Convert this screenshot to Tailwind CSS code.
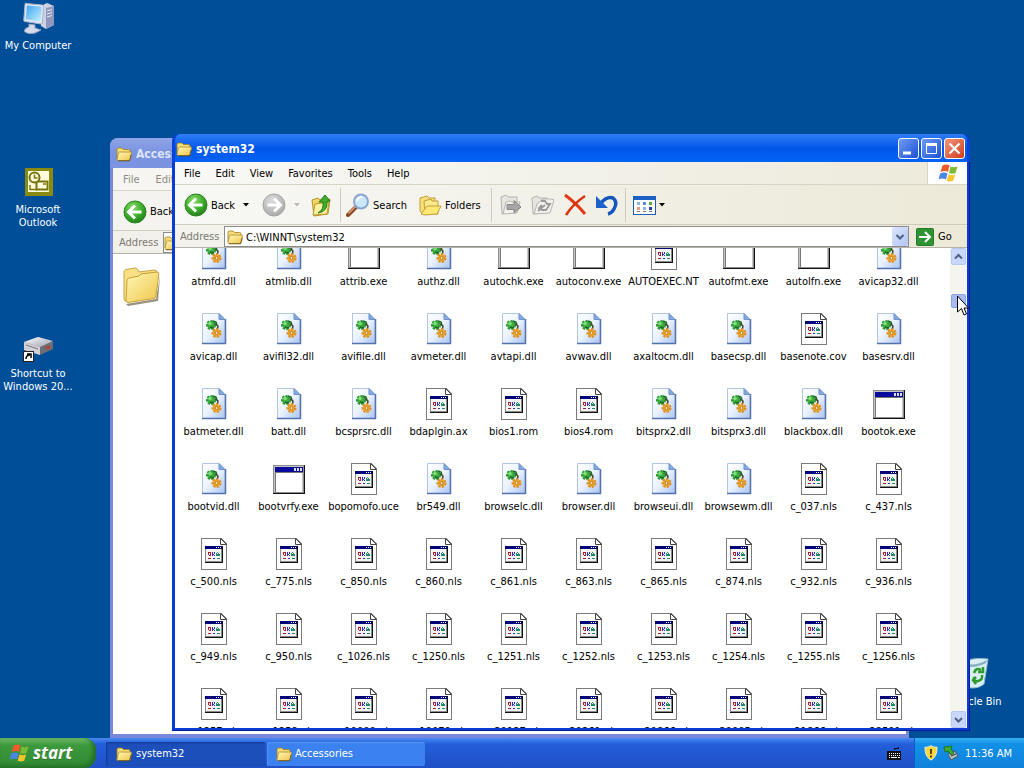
<!DOCTYPE html>
<html lang="en">
<head>
    <meta charset="UTF-8">
    <meta name="viewport" content="width=device-width, initial-scale=1.0">
    <title>system32</title>
    <script src="https://cdn.jsdelivr.net/npm/@tailwindcss/browser@4"></script>
</head>
<body class="h-screen overflow-hidden bg-[#004e98] font-['DejaVu_Sans_Condensed','DejaVu_Sans',sans-serif] text-[11px] leading-[13px] text-black">

    <!-- Icon sprites -->
    <svg class="absolute size-0" xmlns="http://www.w3.org/2000/svg">
        <defs>
            <linearGradient id="gFolder" x1="0" y1="0" x2="1" y2="1"><stop offset="0" stop-color="#fff9b8"/><stop offset="1" stop-color="#efc44a"/></linearGradient>
            <linearGradient id="gPage" x1="0" y1="0" x2="1" y2="1"><stop offset="0" stop-color="#ffffff"/><stop offset=".5" stop-color="#eaf2ff"/><stop offset="1" stop-color="#a9c4f2"/></linearGradient>
            <radialGradient id="gGreen" cx=".4" cy=".3" r=".75"><stop offset="0" stop-color="#8fdc6c"/><stop offset=".55" stop-color="#3fae2c"/><stop offset="1" stop-color="#1f7d17"/></radialGradient>
            <radialGradient id="gGrey" cx=".4" cy=".3" r=".75"><stop offset="0" stop-color="#dcdcdc"/><stop offset="1" stop-color="#a9a9a9"/></radialGradient>
            <linearGradient id="gScreen" x1="0" y1="0" x2="1" y2="1"><stop offset="0" stop-color="#3fa4f2"/><stop offset="1" stop-color="#c4f2fd"/></linearGradient>
            <linearGradient id="gMetal" x1="0" y1="0" x2="1" y2="1"><stop offset="0" stop-color="#ffffff"/><stop offset="1" stop-color="#9a9fae"/></linearGradient>
        </defs>
        <symbol id="dll" viewBox="-1 0 33 32">
            <path d="M4.500 .5h16.500l6 6v24h-22.500z" fill="url(#gPage)" stroke="#b3c5e4"/>
            <path d="M27.500 6v25M4 30.500h24" stroke="#5472ad" stroke-width="1.500"/>
            <path d="M21 .5v6h6z" fill="#84a9e0" stroke="#6f93cd"/>
            <circle cx="13" cy="12" r="3.800" fill="#43b043" stroke="#2f9a32" stroke-width="2.500" stroke-dasharray="2.200 1.200"/>
            <circle cx="12" cy="10.500" r="1.800" fill="#7be07c"/>
            <path d="M15 8l3 1 1 3M12 14l4 1" stroke="#1c6a24" stroke-width="1.500" fill="none"/>
            <path d="M17 11l3 2-1 5" stroke="#45452a" stroke-width="1.500" fill="none"/>
            <circle cx="18.500" cy="20" r="3.800" fill="#f3ad35" stroke="#dd9328" stroke-width="2.500" stroke-dasharray="2.200 1.200"/>
            <circle cx="18.500" cy="20" r="1.500" fill="#fbe8b2" stroke="#b97a1c"/>
        </symbol>
        <symbol id="doc" viewBox="-1 0 33 32" shape-rendering="crispEdges">
            <path d="M3 0h20l6 6v26h-26z" fill="#7b7b7b"/>
            <path d="M4 1h18l6 6v24h-24z" fill="#fff"/>
            <path d="M22.500 .5v6h6z" fill="#fff" stroke="#444" shape-rendering="auto"/>
            <path d="M7 8h18v17h-18z" fill="#111"/>
            <path d="M7 8h17v16h-17z" fill="#8b8b8b"/>
            <path d="M8 9h15v14h-15z" fill="#f4f4f4"/>
            <path d="M7 8h17v3h-17z" fill="#00007b"/>
            <path d="M18 9h1v1h-1zM20 9h1v1h-1zM22 9h1v1h-1z" fill="#fff"/>
            <path d="M10 14h3v1h-3zM10 15h1v2h-1zM12 15h1v2h-1zM11 17h2v1h-2zM10 20h3v1h-3z" fill="#a8202f"/>
            <path d="M14 14h1v4h-1zM15 16h1v1h-1zM16 14h1v2h-1zM16 17h1v1h-1zM15 20h2v1h-2z" fill="#2f2bc8"/>
            <path d="M19 14h1v1h-1zM18 15h1v3h-1zM19 16h3v2h-3zM20 15h1v1h-1zM19 20h3v1h-3z" fill="#1d8a68"/>
        </symbol>
        <symbol id="exe" viewBox="-1 0 33 32" shape-rendering="crispEdges">
            <rect x="0" y="2" width="32" height="29" fill="#111"/>
            <rect x="0" y="2" width="31" height="28" fill="#8c8c8c"/>
            <rect x="1" y="3" width="29" height="26" fill="#c6c6c6"/>
            <rect x="3" y="10" width="26" height="19" fill="#fff"/>
            <path d="M2.500 29v-19.500h27" fill="none" stroke="#777"/>
            <rect x="2" y="4" width="28" height="5" fill="#0a0a9c"/>
            <path d="M21 5h2v3h-2zM24 5h2v3h-2zM27 5h2v3h-2z" fill="#ddd"/>
        </symbol>
        <symbol id="folder" viewBox="0 0 16 16">
            <path d="M1 13V3.500q0-1.500 1.500-1.500h3.500l1.500 1.500h5q1.500 0 1.500 1.500v8z" fill="#f7dc7a" stroke="#a07c1c" stroke-width=".8"/>
            <path d="M2 14.500q-1 0-1-1.200l1.500-6.300q.2-1 1.200-1h10.800q1.200 0 1 1l-1.300 6.500q-.2 1-1.200 1z" fill="url(#gFolder)" stroke="#b08c2c" stroke-width=".8"/>
            <path d="M2 14.800h11.500l1.700-6" fill="none" stroke="#604a10" stroke-width=".8"/>
        </symbol>
        <symbol id="folder-big" viewBox="0 0 40 40">
            <path d="M4 38l30-5 4-23-2 25-30 5z" fill="#6c6247" opacity=".7"/>
            <path d="M2 6q0-2 2-2.500l9-1.500q2 0 3 2l1 2 15-2q3 0 3 2.500l-1 23-29 6q-3 0-3-3z" fill="#f8e184" stroke="#c9a540"/>
            <path d="M4 34.500l1-20q0-2 2-2.500l10-2 2-2 16-2q2 0 1.800 2l-2.800 22q0 2-2 2.500l-26 4q-2 0-2-2z" fill="url(#gFolder)" stroke="#c7a036"/>
        </symbol>
        <symbol id="back" viewBox="0 0 24 24">
            <circle cx="12" cy="12" r="11" fill="url(#gGreen)" stroke="#2c8324"/>
            <path d="M12 5.500L5.500 12l6.500 6.500M6.500 12H18.500" fill="none" stroke="#fff" stroke-width="3"/>
        </symbol>
        <symbol id="forward" viewBox="0 0 24 24">
            <circle cx="12" cy="12" r="11" fill="url(#gGrey)" stroke="#a5a5a5"/>
            <path d="M12 5.500L18.500 12L12 18.500M17.500 12H5.500" fill="none" stroke="#fff" stroke-width="3"/>
        </symbol>
        <symbol id="flag" viewBox="0 0 20 20">
            <path d="M4.500 2.500q4-2 7 0l-1.500 6.500q-3-2-7.500 0z" fill="#ee5b28"/>
            <path d="M12.500 3.500q3 1.500 7 0l-2 6.500q-3.500 1.500-6.500 0z" fill="#7cbb35"/>
            <path d="M2.200 10.500q4-2 7.300 0l-1.500 6q-3.500-2-7.500 0z" fill="#4a86e6"/>
            <path d="M10.500 11.300q3 1.700 6.700 0l-2 6.500q-3.500 1.500-6.500 0z" fill="#f8c52b"/>
        </symbol>
    </svg>

    <div class="flex h-full flex-col">
        <!-- Desktop -->
        <main class="relative flex-1">
            <div class="absolute left-0 top-[2px] flex w-[76px] flex-col items-center gap-[5px] text-center text-white">
                <svg class="size-8" viewBox="0 0 32 32">
                    <path d="M19 4l6-3 7 3v19l-8 4-5-3z" fill="#ccd2e4"/>
                    <path d="M24 6l8-2v19l-8 4z" fill="#8e98bd"/>
                    <path d="M25 9l5-1.500M25 12l5-1.500M25 15l5-1.500" stroke="#e8ebf5"/>
                    <path d="M4 1.500l16 1.500q1.500 0 1.500 1.500l-1 16q0 1.500-1.500 1.500l-16-2.500q-1.500 0-1.200-1.500l1.200-15.500q0-1.500 1-1.500z" fill="#dfe6f2" stroke="#a9b4d0"/>
                    <path d="M5 3.500l14.500 1.300-1 14.700-14.800-2.200z" fill="url(#gScreen)"/>
                    <path d="M7 22l6 1v3l6 2-6 3q-6 2-10-1-2-3 4-5z" fill="#d5daea" stroke="#9aa4c4"/>
                </svg>
                <span>My Computer</span>
            </div>
            <div class="absolute left-0 top-[166px] flex w-[76px] flex-col items-center gap-[5px] text-center text-white">
                <svg class="size-8" viewBox="0 0 32 32">
                    <rect x="3" y="2" width="28" height="28" fill="#8b8a10"/>
                    <rect x="6" y="5" width="21" height="21" fill="#fffde0"/>
                    <rect x="14.500" y="15.500" width="11" height="8" fill="#fffde0" stroke="#777508" stroke-width="2"/>
                    <circle cx="12.500" cy="11.500" r="5" fill="#fffde0" stroke="#777508" stroke-width="2"/>
                    <path d="M12.500 8.500v3.500h3M8 19v4.500h7M21 18h3" stroke="#777508" stroke-width="1.500" fill="none"/>
                </svg>
                <span>Microsoft<br>Outlook</span>
            </div>
            <div class="absolute left-0 top-[330px] flex w-[76px] flex-col items-center gap-[5px] text-center text-white">
                <svg class="size-8" viewBox="0 0 32 32">
                    <path d="M2 12l14-5 15 5v7l-13 6-16-6z" fill="#6d6d74"/>
                    <path d="M2 12l14-5 15 4-13 6z" fill="url(#gMetal)"/>
                    <path d="M2 12l16 5v8l-16-5z" fill="#d0d0d6"/>
                    <path d="M4 15l12 4" stroke="#777"/>
                    <rect x="24" y="16" width="4" height="3" fill="#b94034"/>
                    <rect x="1.500" y="21.500" width="10" height="10" fill="#fff" stroke="#222"/>
                    <path d="M4 29q0-4 4-4M5 24h4v4" stroke="#000" stroke-width="1.500" fill="none"/>
                </svg>
                <span>Shortcut to<br>Windows 20...</span>
            </div>
            <div class="absolute left-[935px] top-[658px] flex w-[76px] flex-col items-center gap-[5px] text-center text-white">
                <svg class="size-8" viewBox="0 0 32 32">
                    <path d="M5 4q12-5 26-3l-4 25q-7 6-18 3z" fill="#d9eef5" stroke="#8fbccb"/>
                    <path d="M6 5q12 4 24-3l-1 3q-12 6-22 3z" fill="#86aebf"/>
                    <path d="M17 15q2-6 7-3M26 9v5h-5M25 17q1 5-4 6M17 19q-1 5 4 4M19 26l-3-4 3-3" fill="none" stroke="#2e9b2c" stroke-width="2.500"/>
                </svg>
                <span>Recycle Bin</span>
            </div>

            <!-- Accessories window -->
            <section class="absolute bottom-0 left-[110px] top-[138px] flex w-[799px] flex-col overflow-hidden rounded-t-lg bg-[#7a88dc] px-[3px] pb-1">
                <header class="-mx-[3px] flex h-[30px] items-center gap-1 bg-linear-to-b from-[#8fa5e8] via-[#7a92e0] to-[#7b94e2] pl-[6px] pt-[2px] text-xs font-bold text-[#dbe4fa]">
                    <svg class="size-4"><use href="#folder"/></svg>
                    <h2>Accessories</h2>
                </header>
                <nav class="flex h-[23px] items-center gap-4 border-b border-[#d8d5c8] bg-[#f6f5f1] pl-[10px] text-[#8d8b84]">
                    <span>File</span><span>Edit</span>
                </nav>
                <div class="flex h-10 items-center gap-[3px] border-b border-[#d0cdbf] bg-[#f4f3ef] pl-[10px] pt-[2px]">
                    <svg class="size-6"><use href="#back"/></svg>
                    <span>Back</span>
                </div>
                <div class="flex h-[23px] items-center gap-1 border-b border-[#b5b3aa] bg-[#f1f0ea] pl-[6px] pt-[1px] text-[#7c7a73]">
                    <span class="w-10">Address</span>
                    <span class="flex h-[21px] flex-1 items-center border border-[#8b8b8b] bg-white"><svg class="size-4"><use href="#folder"/></svg></span>
                </div>
                <div class="flex-1 bg-white px-[9px] pt-3"><svg class="size-10"><use href="#folder-big"/></svg></div>
            </section>

            <!-- system32 window -->
            <section class="absolute bottom-[7px] left-[172px] top-[134px] flex w-[798px] flex-col rounded-t-lg bg-[#0a3bd2] px-[3px] pb-[3px] shadow-[inset_-1px_-1px_0_#001c96]">
                <header class="-mx-[3px] flex h-7 items-center gap-1 rounded-t-lg border-x-[3px] border-[#0844d8] bg-linear-to-b from-[#2f7df6] via-[#0256e8] to-[#0463f5] pl-[1px] pr-[2px] pt-[1px] text-xs font-bold text-white">
                    <svg class="size-4"><use href="#folder"/></svg>
                    <h1 class="flex-1 pt-[1px]">system32</h1>
                    <div class="flex gap-[2px]">
                        <button aria-label="Minimize" class="size-[21px] rounded-[3px] border border-white bg-linear-to-br from-[#6f9af5] to-[#1c4fd4]"><svg viewBox="0 0 19 19"><path d="M4 14h8" stroke="#fff" stroke-width="3"/></svg></button>
                        <button aria-label="Maximize" class="size-[21px] rounded-[3px] border border-white bg-linear-to-br from-[#6f9af5] to-[#1c4fd4]"><svg viewBox="0 0 19 19"><path d="M4.500 5v9.500h10v-9.500" fill="none" stroke="#fff"/><path d="M4 5.500h11" stroke="#fff" stroke-width="3"/></svg></button>
                        <button aria-label="Close" class="size-[21px] rounded-[3px] border border-white bg-linear-to-br from-[#f0957a] to-[#cf3a16]"><svg viewBox="0 0 19 19"><path d="M4.500 4.500l10 10M14.500 4.500l-10 10" stroke="#fff" stroke-width="2.200"/></svg></button>
                    </div>
                </header>

                <div class="flex h-[23px] border-b border-[#d8d4c4] bg-linear-to-r from-[#f8f8f6] to-[#edeadb]">
                    <nav class="flex flex-1 items-center gap-[15px] pl-[9px]">
                        <button>File</button><button>Edit</button><button>View</button><button>Favorites</button><button>Tools</button><button>Help</button>
                    </nav>
                    <div class="flex w-10 items-center justify-center border-l border-[#d8d4c4] bg-white"><svg class="size-5"><use href="#flag"/></svg></div>
                </div>

                <div class="flex h-10 items-center border-b border-[#cfccbd] bg-linear-to-r from-[#f8f8f6] to-[#ece9d8] pl-[9px] pt-[1px]">
                    <button class="flex w-[58px] items-center gap-[3px]"><svg class="size-6"><use href="#back"/></svg>Back</button>
                    <svg class="h-1 w-2" viewBox="0 0 8 4"><path d="M1 0h6l-3 3.500z" fill="#000"/></svg>
                    <button aria-label="Forward" class="ml-3"><svg class="size-6"><use href="#forward"/></svg></button>
                    <svg class="ml-[7px] h-1 w-2" viewBox="0 0 8 4"><path d="M1 0h6l-3 3.500z" fill="#bcbab2"/></svg>
                    <button aria-label="Up" class="ml-2">
                        <svg class="size-6" viewBox="0 0 24 24">
                            <path d="M3 7l6-2 2 2 10-1-2 15-14 2z" fill="#f2d467" stroke="#b8962e"/>
                            <path d="M4 22l2-11 14-2-2 12z" fill="#fdf0a0" stroke="#b8962e"/>
                            <path d="M9 20q6-3 5-11h-4l6-7 5 6-3 .5q1 10-9 11.500z" fill="#3fae2c" stroke="#227a1b"/>
                        </svg>
                    </button>
                    <span class="ml-[7px] h-[34px] border-l border-[#cfccbe]"></span>
                    <button class="ml-[5px] flex w-[68px] items-center gap-[3px]">
                        <svg class="size-6" viewBox="0 0 24 24">
                            <path d="M10 14l-8 8" stroke="#8b4a22" stroke-width="4" stroke-linecap="round"/><path d="M9.500 13.500l-7 7" stroke="#e2a27c" stroke-width="1.500"/>
                            <circle cx="15" cy="8.500" r="7" fill="#c9e8fb" stroke="#8aa7d4" stroke-width="2"/><path d="M11 8q1-4 5-4" stroke="#fff" stroke-width="2" fill="none"/>
                        </svg>Search
                    </button>
                    <button class="ml-1 flex w-[69px] items-center gap-[3px]">
                        <svg class="size-6" viewBox="0 0 24 24">
                            <path d="M2 5l7-2 2 2h6v14l-13 1-2-2z" fill="#f8e07c" stroke="#c39f38"/><path d="M6 8l7-2 1 2h6v13h-13z" fill="#fbe98f" stroke="#c39f38"/><path d="M3 21l6-8h14l-4 8-12 1z" fill="#ffe873" stroke="#c39f38"/>
                        </svg>Folders
                    </button>
                    <span class="ml-1 h-[34px] border-l border-[#cfccbe]"></span>
                    <button aria-label="Move To" class="ml-[7px]">
                        <svg class="size-6" viewBox="0 0 24 24"><path d="M2 4l5-2 2 2h9v14l-15 3z" fill="#e6e5e2" stroke="#b5b4b0"/><path d="M4 21l3-12 4-1 2 1h8l-3 11z" fill="#f2f1ee" stroke="#b5b4b0"/><path d="M8 11.500h7v-4l7 6.500-7 6v-3.500h-7z" fill="#a5a5a5" stroke="#888"/></svg>
                    </button>
                    <button aria-label="Copy To" class="ml-[7px]">
                        <svg class="size-6" viewBox="0 0 24 24"><path d="M2 5l5-2 2 2h8l-2 15-12 1z" fill="#e6e5e2" stroke="#b5b4b0"/><path d="M4 21l3-10 6-5h8l3 1-4 13z" fill="#f2f1ee" stroke="#b5b4b0"/><path d="M8 18l7-6M11 8h4l2 3h3l-4 6h-4l-3-2 3-3" fill="none" stroke="#999" stroke-width="1.800"/></svg>
                    </button>
                    <button aria-label="Delete" class="ml-[9px]">
                        <svg class="size-6" viewBox="0 0 24 24"><path d="M2 2q11 8 20 19" stroke="#e23a12" stroke-width="3" fill="none"/><path d="M22 3q-12 8-19 19" stroke="#d8340f" stroke-width="2.500" fill="none"/></svg>
                    </button>
                    <button aria-label="Undo" class="ml-2">
                        <svg class="size-6" viewBox="0 0 24 24"><path d="M6 10q6-7 12-5 5 4 1 11-2 4-6 5" fill="none" stroke="#1457bd" stroke-width="3.500"/><path d="M1 3v12h12z" fill="#1c62c8"/></svg>
                    </button>
                    <span class="ml-[6px] h-[34px] border-l border-[#cfccbe]"></span>
                    <button aria-label="Views" class="ml-[6px] flex items-center gap-[2px]">
                        <svg class="size-6" viewBox="0 0 24 24" shape-rendering="crispEdges">
                            <rect x="1.500" y="3.500" width="22" height="18" fill="#fff" stroke="#1d5cb8"/><rect x="1" y="3" width="23" height="4" fill="#1c62c4"/>
                            <path d="M5 9h3v3h-3zM11 14h3v3h-3z" fill="#8fb2e4"/><path d="M11 9h3v3h-3z" fill="#5a8ee0"/><path d="M17 9h3v3h-3z" fill="#57a944"/><path d="M5 14h3v3h-3z" fill="#e79b86"/><path d="M17 14h3v3h-3z" fill="#2c3eaa"/><path d="M5 18h3v1h-3zM11 18h3v1h-3zM17 18h3v1h-3z" fill="#777"/>
                        </svg>
                        <svg class="h-1 w-2" viewBox="0 0 8 4"><path d="M1 0h6l-3 3.500z" fill="#000"/></svg>
                    </button>
                </div>

                <div class="flex h-[23px] items-center border-b border-[#b5b3aa] bg-linear-to-r from-[#f3f2ec] to-[#ece9d8] pl-[5px] pt-[1px]">
                    <label for="address" class="w-11 text-[#7c7a73]">Address</label>
                    <div class="flex h-[21px] flex-1 items-center border border-[#8b8b8b] bg-white pl-[2px]">
                        <svg class="size-4"><use href="#folder"/></svg>
                        <input id="address" type="text" value="C:\WINNT\system32" class="ml-[3px] flex-1 pt-[1px] outline-none">
                        <button aria-label="Show addresses" class="h-[19px] w-4 rounded-xs bg-linear-to-br from-[#dbe5fd] to-[#b2c5f3]"><svg viewBox="0 0 16 16"><path d="M4.500 6l3.500 3.500 3.500-3.500" fill="none" stroke="#4d6185" stroke-width="2"/></svg></button>
                    </div>
                    <button class="ml-[7px] flex w-[51px] items-center gap-1">
                        <svg class="size-[18px]" viewBox="0 0 18 18"><rect x=".5" y=".5" width="17" height="17" rx="1" fill="#2f9334" stroke="#237a28"/><path d="M3 9h10M9 4l5 5-5 5" fill="none" stroke="#fff" stroke-width="2"/></svg>Go
                    </button>
                </div>

                <div class="flex min-h-0 flex-1 overflow-hidden bg-white">
                    <ul id="files" class="-mt-[10px] grid flex-1 auto-rows-[75px] grid-cols-[repeat(auto-fill,75px)] pl-[1px]"></ul>
                    <div class="flex w-[17px] flex-col items-center bg-[#f5f4ee]">
                        <button aria-label="Scroll up" class="h-[17px] w-[15px] rounded-xs border border-[#b6c7f0] bg-[#c9d7fc]"><svg viewBox="0 0 13 15"><path d="M3 9.500l3.500-3.500 3.500 3.500" fill="none" stroke="#4d6185" stroke-width="2"/></svg></button>
                        <div class="mt-[29px] h-[14px] w-[15px] rounded-xs border border-[#8da4dc] bg-[#a7bbf0]"></div>
                        <button aria-label="Scroll down" class="mt-auto h-[17px] w-[15px] rounded-xs border border-[#b6c7f0] bg-[#c9d7fc]"><svg viewBox="0 0 13 15"><path d="M3 6l3.500 3.500 3.500-3.500" fill="none" stroke="#4d6185" stroke-width="2"/></svg></button>
                    </div>
                </div>
            </section>

            <!-- Mouse pointer -->
            <svg class="absolute left-[957px] top-[295px] h-[21px] w-3" viewBox="0 0 12 21"><path d="M.5 1v16l4-3.500 2.500 6.500 2.500-1-2.500-6h4.500z" fill="#fff" stroke="#000"/></svg>
        </main>

        <!-- Taskbar -->
        <footer class="flex h-[30px] bg-linear-to-b from-[#4a8af2] via-[#245edb] via-20% to-[#1f4fc4] text-white">
            <button class="flex w-24 items-center gap-1 rounded-r-xl bg-linear-to-b from-[#6cbb66] via-[#3c993d] via-25% to-[#2f8a31] pl-[9px] text-[17px] font-bold italic leading-5 font-['Open_Sans',sans-serif] shadow-[inset_-3px_-2px_4px_#236b26] text-shadow-xs">
                <svg class="size-5"><use href="#flag"/></svg>start
            </button>
            <div class="flex flex-1 items-center gap-[2px] pl-[10px] pt-[1px]">
                <button class="flex h-6 w-[159px] items-center gap-1 rounded-xs bg-[#1c4fba] pl-[10px] shadow-[inset_1px_1px_2px_#123a90]"><svg class="size-4"><use href="#folder"/></svg>system32</button>
                <button class="flex h-6 w-[158px] items-center gap-[3px] rounded-xs bg-[#3c81f0] pl-[9px] shadow-[inset_1px_1px_1px_#5394f6]"><svg class="size-4"><use href="#folder"/></svg>Accessories</button>
            </div>
            <svg class="mr-3 mt-2 size-4" viewBox="0 0 16 16" shape-rendering="crispEdges"><path d="M8 4v-2h4v-1" stroke="#111" fill="none"/><rect x="1" y="5" width="14" height="9" fill="#111"/><path d="M3 7.500h11M3 9.500h11" stroke="#fff" stroke-dasharray="1 1"/><path d="M3 11.500h1M5 11.500h6M12 11.500h2" stroke="#fff"/></svg>
            <div class="flex w-[110px] items-center border-l border-[#0a5fc0] bg-linear-to-b from-[#35b1f5] via-[#1290e8] via-20% to-[#0f82dc] pl-2">
                <svg class="size-4" viewBox="0 0 16 16"><path d="M8 .7q3 2 6 1.500.5 9-6 13-6.500-4-6-13 3 .5 6-1.500z" fill="#f7d63c" stroke="#e9efd8"/><path d="M8 4v5" stroke="#5c4300" stroke-width="2"/><path d="M8 10.500v2" stroke="#5c4300" stroke-width="2"/></svg>
                <svg class="ml-1 size-4" viewBox="0 0 16 16"><path d="M5 9l7-3 3 5-7 4z" fill="#b7bfc6" stroke="#4b5660"/><path d="M8 11l5-2" stroke="#333"/><path d="M1 2l8-1-1 3 3 4-3 2-3-4-3 1z" fill="#3cab36" stroke="#1f7423"/></svg>
                <time class="ml-[6px] whitespace-nowrap">11:36 AM</time>
            </div>
        </footer>
    </div>

    <script>
        const names = `atmfd.dll atmlib.dll attrib.exe authz.dll autochk.exe autoconv.exe AUTOEXEC.NT autofmt.exe autolfn.exe avicap32.dll
            avicap.dll avifil32.dll avifile.dll avmeter.dll avtapi.dll avwav.dll axaltocm.dll basecsp.dll basenote.cov basesrv.dll
            batmeter.dll batt.dll bcsprsrc.dll bdaplgin.ax bios1.rom bios4.rom bitsprx2.dll bitsprx3.dll blackbox.dll bootok.exe
            bootvid.dll bootvrfy.exe bopomofo.uce br549.dll browselc.dll browser.dll browseui.dll browsewm.dll c_037.nls c_437.nls
            c_500.nls c_775.nls c_850.nls c_860.nls c_861.nls c_863.nls c_865.nls c_874.nls c_932.nls c_936.nls
            c_949.nls c_950.nls c_1026.nls c_1250.nls c_1251.nls c_1252.nls c_1253.nls c_1254.nls c_1255.nls c_1256.nls
            c_1257.nls c_1258.nls c_10000.nls c_10079.nls c_20127.nls c_20261.nls c_20866.nls c_20905.nls c_21866.nls c_28591.nls`.split(/\s+/);

        document.getElementById('files').innerHTML = names.map(name => {
            const ext = name.split('.')[1];
            const icon = ext === 'dll' || ext === 'exe' ? ext : 'doc';
            return `<li class="flex flex-col items-center gap-[5px] whitespace-nowrap"><svg class="h-8 w-[33px]"><use href="#${icon}"/></svg>${name}</li>`;
        }).join('');
    </script>
</body>
</html>
